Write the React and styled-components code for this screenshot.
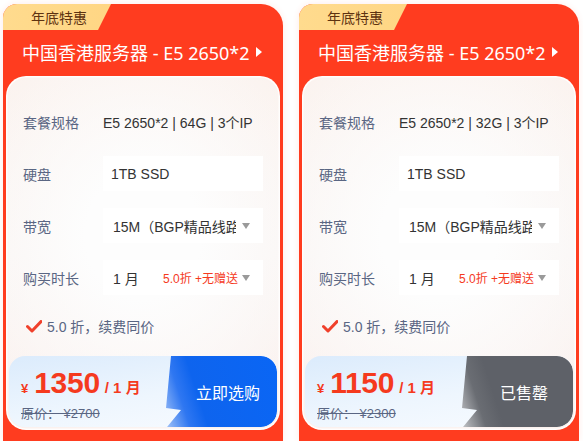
import React from "react";
import styled, { createGlobalStyle } from "styled-components";

const Global = createGlobalStyle`
  html, body { margin: 0; padding: 0; background: #fff; overflow: hidden; }
  body { font-family: "Liberation Sans", "Noto Sans CJK SC", sans-serif; }
  * { box-sizing: border-box; }
`;

const Page = styled.div`
  display: flex;
  gap: 16px;
  padding: 4px 0 0 3px;
  width: 583px;
  height: 441px;
`;

const Card = styled.div`
  width: 280px;
  flex: none;
  background: #ff3c1f;
  border-radius: 14px 22px 0 0;
  overflow: hidden;
  display: flex;
  flex-direction: column;
  padding-bottom: 20px;
  box-shadow: 0 0 6px rgba(255, 90, 60, 0.12);
`;

const Badge = styled.div`
  width: 108px;
  height: 26px;
  background: linear-gradient(90deg, #ffdb8e, #ffd684);
  clip-path: polygon(0 0, 100% 0, 88% 100%, 0 100%);
  border-bottom-right-radius: 8px;
  color: #5e3210;
  font-family: "Noto Sans CJK SC", sans-serif;
  font-size: 14px;
  line-height: 26px;
  padding-left: 28px;
`;

const Title = styled.div`
  display: flex;
  align-items: center;
  height: 28px;
  margin: 9px 0 11px;
  padding-left: 19px;
  color: #fff;
  font-family: "Noto Sans", "Noto Sans CJK SC", sans-serif;
  font-size: 18px;
  white-space: nowrap;
`;

const Caret = styled.span`
  display: inline-block;
  margin-left: 6px;
  width: 0;
  height: 0;
  border-top: 5px solid transparent;
  border-bottom: 5px solid transparent;
  border-left: 6px solid #fff;
`;

const Panel = styled.div`
  margin: 0 3px;
  border-radius: 20px;
  background:
    radial-gradient(ellipse 70% 60% at 50% 45%, #fdfdfd 30%, rgba(253,253,253,0) 100%),
    linear-gradient(180deg, #fbf3ef 0%, #f9f4f2 50%, #fbf1ee 100%);
  box-shadow: inset 0 0 0 1.5px rgba(255, 255, 255, 0.85);
  padding: 28px 3px 3px;
  display: flex;
  flex-direction: column;
`;

const Rows = styled.div`
  padding: 0 14px;
  display: flex;
  flex-direction: column;
  gap: 17px;
`;

const Row = styled.div`
  display: grid;
  grid-template-columns: 80px 160px;
  align-items: center;
  height: 35px;
`;

const Label = styled.div`
  color: #5a6683;
  font-size: 14px;
  white-space: nowrap;
`;

const Value = styled.div`
  color: #333;
  font-size: 14px;
  white-space: nowrap;
`;

const Box = styled.div`
  height: 35px;
  background: #fff;
  display: flex;
  align-items: center;
  padding: 0 13px 0 ${(p) => p.$pl || 8}px;
  color: #333;
  font-size: 14px;
  white-space: nowrap;
  gap: 6px;
`;

const BoxText = styled.span`
  flex: 1;
  overflow: hidden;
  min-width: 0;
`;

const Promo = styled.span`
  color: #f53a1e;
  font-size: 12px;
  margin-right: -2px;
`;

const Arrow = styled.span`
  flex: none;
  width: 0;
  height: 0;
  border-left: 4.5px solid transparent;
  border-right: 4.5px solid transparent;
  border-top: 6px solid #9a9a9a;
`;

const Check = styled.div`
  display: flex;
  align-items: center;
  gap: 5px;
  height: 20px;
  margin-top: 21px;
  padding-left: 17px;
  color: #5a6683;
  font-size: 14px;
`;

const PriceBox = styled.div`
  margin-top: 20px;
  height: 71px;
  border-radius: 16px;
  background: linear-gradient(170deg, #dbebfc 0%, #eef6fe 55%, #f8fbff 100%);
  display: flex;
  overflow: hidden;
`;

const PriceLeft = styled.div`
  flex: 1;
  display: flex;
  flex-direction: column;
  justify-content: center;
  padding: 4px 0 0 12px;
`;

const PriceLine = styled.div`
  display: flex;
  align-items: baseline;
  color: #f53a1e;
  font-weight: bold;
  white-space: nowrap;
`;

const Yen = styled.span`
  font-size: 13px;
  margin-right: 6px;
`;

const Amount = styled.span`
  font-size: 30px;
  letter-spacing: -0.3px;
`;

const Per = styled.span`
  font-size: 15px;
  margin-left: 5px;
  font-family: "Liberation Sans", "Noto Sans CJK SC", sans-serif;
`;

const Orig = styled.div`
  margin-top: 3px;
  color: #5a6683;
  font-size: 13px;
  text-decoration: line-through;
  white-space: nowrap;
`;

const Button = styled.div`
  width: 118px;
  flex: none;
  border-radius: 0 16px 16px 0;
  clip-path: polygon(12px 0, 100% 0, 100% 100%, 8px 100%, 22px 54px, 7px 52px);
  background: ${(p) =>
    p.$soldOut
      ? "linear-gradient(72deg, #e4e4e6 0%, #a8aaae 10%, #6a6d73 22%, #5e6168 35%, #5e6168 100%)"
      : "linear-gradient(72deg, #cfe1fb 0%, #80acf5 10%, #2f77f1 22%, #0e64ee 35%, #0a66f5 100%)"};
  color: #fff;
  font-family: "Noto Sans CJK SC", sans-serif;
  font-size: 16px;
  display: flex;
  align-items: center;
  justify-content: center;
  padding-left: 20px;
  padding-top: 1px;
`;

function CheckIcon() {
  return (
    <svg width="16" height="13" viewBox="0 0 16 13">
      <path d="M1.5 6.5 L6 11 L15 1.5" fill="none" stroke="#f0402b" strokeWidth="3" strokeLinecap="round" strokeLinejoin="round" />
    </svg>
  );
}

function ProductCard({ spec, price, orig, soldOut }) {
  return (
    <Card>
      <Badge>年底特惠</Badge>
      <Title>
        中国香港服务器 - E5 2650*2
        <Caret />
      </Title>
      <Panel>
        <Rows>
          <Row>
            <Label>套餐规格</Label>
            <Value>{spec}</Value>
          </Row>
          <Row>
            <Label>硬盘</Label>
            <Box>1TB SSD</Box>
          </Row>
          <Row>
            <Label>带宽</Label>
            <Box $pl={10}>
              <BoxText>15M（BGP精品线路）</BoxText>
              <Arrow />
            </Box>
          </Row>
          <Row>
            <Label>购买时长</Label>
            <Box $pl={10}>
              <BoxText>1 月</BoxText>
              <Promo>5.0折 +无赠送</Promo>
              <Arrow />
            </Box>
          </Row>
        </Rows>
        <Check>
          <CheckIcon />
          5.0 折，续费同价
        </Check>
        <PriceBox>
          <PriceLeft>
            <PriceLine>
              <Yen>¥</Yen>
              <Amount>{price}</Amount>
              <Per>/ 1 月</Per>
            </PriceLine>
            <Orig>原价： ¥{orig}</Orig>
          </PriceLeft>
          <Button $soldOut={soldOut}>{soldOut ? "已售罄" : "立即选购"}</Button>
        </PriceBox>
      </Panel>
    </Card>
  );
}

export default function App() {
  return (
    <>
      <Global />
      <Page>
        <ProductCard spec="E5 2650*2 | 64G | 3个IP" price="1350" orig="2700" />
        <ProductCard spec="E5 2650*2 | 32G | 3个IP" price="1150" orig="2300" soldOut />
      </Page>
    </>
  );
}
